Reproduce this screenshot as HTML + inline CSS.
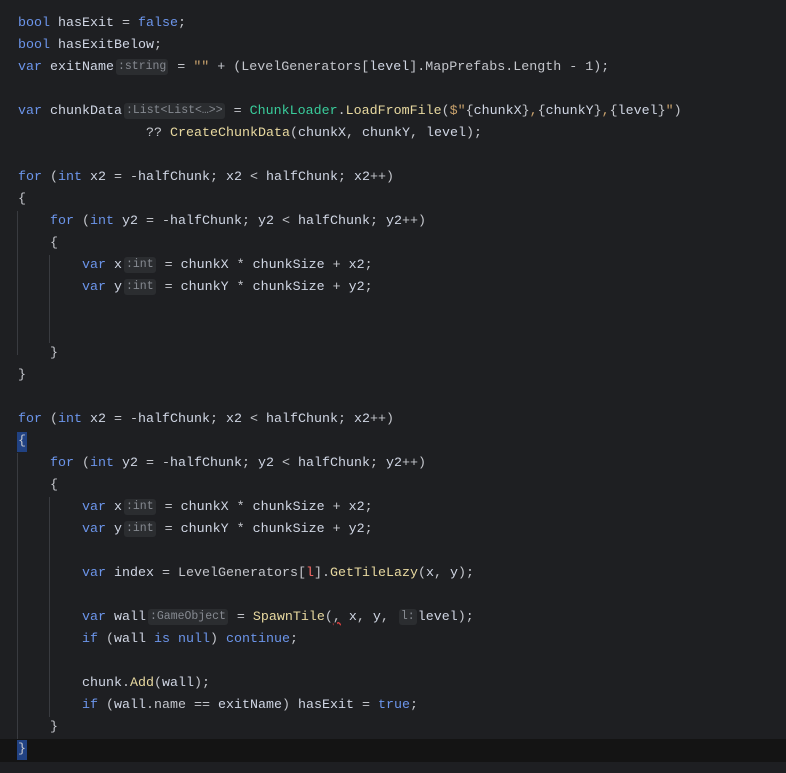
<!DOCTYPE html>
<html><head><meta charset="utf-8"><style>
html,body{margin:0;padding:0;background:#1e1f22;width:786px;height:773px;overflow:hidden}
body{position:relative;font-family:"Liberation Mono",monospace;font-size:13.33px;color:#c4c6cc}
.l{position:absolute;left:18px;height:22px;line-height:22px;white-space:pre}
.k{color:#6c95eb}.v{color:#d0d6e4}.s{color:#c9a26d}.m{color:#39cc9b}.f{color:#e8d9a0}.r{color:#ff6b68}
.h{display:inline-block;background:#2b2d30;color:#868a91;font-size:11.5px;line-height:16px;border-radius:3px;padding:0 2px;margin:0 1px 0 2px;vertical-align:1px}
.g{position:absolute;width:1px;background:#393b40}
.cur{position:absolute;left:0;top:739px;width:786px;height:23px;background:#141414}
.b{background:#214283;display:inline-block;line-height:20px;padding:0 1px;margin-left:-1px}
</style></head><body>
<div class="cur"></div>
<div class="g" style="left:17px;top:211px;height:144px"></div>
<div class="g" style="left:49px;top:255px;height:88px"></div>
<div class="g" style="left:17px;top:453px;height:286px"></div>
<div class="g" style="left:49px;top:497px;height:220px"></div>
<div class="l" style="top:13px"><span class="k">bool</span> <span class="v">hasExit</span> = <span class="k">false</span>;</div>
<div class="l" style="top:35px"><span class="k">bool</span> <span class="v">hasExitBelow</span>;</div>
<div class="l" style="top:57px"><span class="k">var</span> <span class="v">exitName</span><span class="h">:string</span> = <span class="s">""</span> + (LevelGenerators[<span class="v">level</span>].MapPrefabs.Length - 1);</div>
<div class="l" style="top:101px"><span class="k">var</span> <span class="v">chunkData</span><span class="h">:List&lt;List&lt;…&gt;&gt;</span> = <span class="m">ChunkLoader</span>.<span class="f">LoadFromFile</span>(<span class="s">$"</span>{<span class="v">chunkX</span>}<span class="s">,</span>{<span class="v">chunkY</span>}<span class="s">,</span>{<span class="v">level</span>}<span class="s">"</span>)</div>
<div class="l" style="top:123px">                ?? <span class="f">CreateChunkData</span>(<span class="v">chunkX</span>, <span class="v">chunkY</span>, <span class="v">level</span>);</div>
<div class="l" style="top:167px"><span class="k">for</span> (<span class="k">int</span> <span class="v">x2</span> = -<span class="v">halfChunk</span>; <span class="v">x2</span> &lt; <span class="v">halfChunk</span>; <span class="v">x2</span>++)</div>
<div class="l" style="top:189px">{</div>
<div class="l" style="top:211px">    <span class="k">for</span> (<span class="k">int</span> <span class="v">y2</span> = -<span class="v">halfChunk</span>; <span class="v">y2</span> &lt; <span class="v">halfChunk</span>; <span class="v">y2</span>++)</div>
<div class="l" style="top:233px">    {</div>
<div class="l" style="top:255px">        <span class="k">var</span> <span class="v">x</span><span class="h">:int</span> = <span class="v">chunkX</span> * <span class="v">chunkSize</span> + <span class="v">x2</span>;</div>
<div class="l" style="top:277px">        <span class="k">var</span> <span class="v">y</span><span class="h">:int</span> = <span class="v">chunkY</span> * <span class="v">chunkSize</span> + <span class="v">y2</span>;</div>
<div class="l" style="top:343px">    }</div>
<div class="l" style="top:365px">}</div>
<div class="l" style="top:409px"><span class="k">for</span> (<span class="k">int</span> <span class="v">x2</span> = -<span class="v">halfChunk</span>; <span class="v">x2</span> &lt; <span class="v">halfChunk</span>; <span class="v">x2</span>++)</div>
<div class="l" style="top:431px"><span class="b">{</span></div>
<div class="l" style="top:453px">    <span class="k">for</span> (<span class="k">int</span> <span class="v">y2</span> = -<span class="v">halfChunk</span>; <span class="v">y2</span> &lt; <span class="v">halfChunk</span>; <span class="v">y2</span>++)</div>
<div class="l" style="top:475px">    {</div>
<div class="l" style="top:497px">        <span class="k">var</span> <span class="v">x</span><span class="h">:int</span> = <span class="v">chunkX</span> * <span class="v">chunkSize</span> + <span class="v">x2</span>;</div>
<div class="l" style="top:519px">        <span class="k">var</span> <span class="v">y</span><span class="h">:int</span> = <span class="v">chunkY</span> * <span class="v">chunkSize</span> + <span class="v">y2</span>;</div>
<div class="l" style="top:563px">        <span class="k">var</span> <span class="v">index</span> = LevelGenerators[<span class="r">l</span>].<span class="f">GetTileLazy</span>(<span class="v">x</span>, <span class="v">y</span>);</div>
<div class="l" style="top:607px">        <span class="k">var</span> <span class="v">wall</span><span class="h">:GameObject</span> = <span class="f">SpawnTile</span>(<span style="text-decoration:underline wavy #e04040">,</span> <span class="v">x</span>, <span class="v">y</span>, <span class="h">l:</span><span class="v">level</span>);</div>
<div class="l" style="top:629px">        <span class="k">if</span> (<span class="v">wall</span> <span class="k">is</span> <span class="k">null</span>) <span class="k">continue</span>;</div>
<div class="l" style="top:673px">        <span class="v">chunk</span>.<span class="f">Add</span>(<span class="v">wall</span>);</div>
<div class="l" style="top:695px">        <span class="k">if</span> (<span class="v">wall</span>.name == <span class="v">exitName</span>) <span class="v">hasExit</span> = <span class="k">true</span>;</div>
<div class="l" style="top:717px">    }</div>
<div class="l" style="top:739px"><span class="b">}</span></div>
</body></html>
